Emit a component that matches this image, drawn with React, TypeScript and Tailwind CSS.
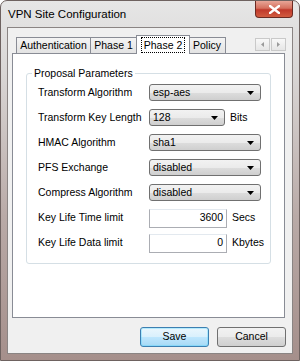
import React from "react";

const font = { fontFamily: '"Liberation Sans", Arial, sans-serif' };

function Combo({ value, w }: { value: string; w: string }) {
  return (
    <div
      className={`${w} h-[17px] flex items-center justify-between rounded-[3px] border border-[#707070] bg-[linear-gradient(to_bottom,#f2f2f2_0%,#ebebeb_50%,#dddddd_51%,#cfcfcf_100%)] pl-[3px] pr-[6px] text-[10.5px] text-black`}
    >
      <span>{value}</span>
      <svg width="7" height="4" viewBox="0 0 7 4">
        <path d="M0 0h7L3.5 4z" fill="#000" />
      </svg>
    </div>
  );
}

function Field({ value }: { value: string }) {
  return (
    <div className="w-[78px] h-[19px] flex items-center justify-end border border-[#abadb3] border-t-[#e3e9ef] bg-white pr-[3px] text-[10.5px] text-black">
      {value}
    </div>
  );
}

function Row({ label, children, h = "h-[25px]" }: { label: string; children: React.ReactNode; h?: string }) {
  return (
    <div className={`flex items-center ${h}`}>
      <div className="w-[122px] pl-[11px] text-[10.5px] text-black whitespace-nowrap">{label}</div>
      <div className="flex items-center gap-[5px] text-[10.5px] text-black">{children}</div>
    </div>
  );
}

const tabCls =
  "h-[16px] flex items-center justify-center border border-b-0 border-[#898c95] bg-[linear-gradient(to_bottom,#f4f4f4,#e3e3e3)] text-[10.5px] text-black";

export default function App() {
  return (
    <div
      className="w-[300px] h-[361px] rounded-t-[7px] border border-[#6e6260] bg-[linear-gradient(to_bottom,#e6e6e6_0%,#d9d6d5_20%,#b9aaa7_60%,#a58f8b_100%)] flex flex-col overflow-hidden"
      style={font}
    >
      {/* title bar */}
      <div className="h-[26px] flex items-start justify-between shrink-0">
        <div className="pl-[7px] pt-[5px] text-[11.5px] text-black leading-[16px]">VPN Site Configuration</div>
        <div className="mr-[6px] w-[38px] h-[17px] rounded-b-[4px] border border-t-0 border-[#6b2a22] bg-[linear-gradient(to_bottom,#e8a597_0%,#d5705e_45%,#c0392b_55%,#d25c40_100%)] flex items-center justify-center">
          <svg width="11" height="9" viewBox="0 0 11 9">
            <path d="M1 1l9 7M10 1L1 8" stroke="#fff" strokeWidth="2.4" strokeLinecap="square" />
          </svg>
        </div>
      </div>

      {/* client area */}
      <div className="mx-[6px] h-[327px] border border-[#8a8483] bg-[#f0f0f0] flex flex-col shrink-0">
        {/* tabs */}
        <div className="flex items-end justify-between h-[25px] pl-[8px] pr-[6px] pt-[6px] shrink-0">
          <div className="flex items-end h-full">
            <div className={`${tabCls} w-[75px]`}>Authentication</div>
            <div className={`${tabCls} w-[46px] border-l-0`}>Phase 1</div>
            <div className="h-[19px] w-[54px] -mx-[1px] flex items-center justify-center border border-b-0 border-[#898c95] bg-white text-[10.5px] text-black relative z-10 -mb-[1px]">
              <span className="px-[2px] leading-[14px] border border-dotted border-black">Phase 2</span>
            </div>
            <div className={`${tabCls} w-[37px] border-l-0`}>Policy</div>
          </div>
          <div className="flex mb-[2px] gap-[1px]">
            <div className="w-[15px] h-[13px] border border-[#c9c9c9] bg-[linear-gradient(to_bottom,#f8f8f8,#e6e6e6)] flex items-center justify-center">
              <svg width="3" height="5" viewBox="0 0 3 5"><path d="M3 0v5L0 2.5z" fill="#9a9a9a" /></svg>
            </div>
            <div className="w-[15px] h-[13px] border border-[#c9c9c9] bg-[linear-gradient(to_bottom,#f8f8f8,#e6e6e6)] flex items-center justify-center">
              <svg width="3" height="5" viewBox="0 0 3 5"><path d="M0 0v5l3-2.5z" fill="#9a9a9a" /></svg>
            </div>
          </div>
        </div>

        {/* panel */}
        <div className="ml-[4px] mr-[7px] h-[265px] border border-[#898c95] bg-white pt-[19px] px-[13px] shrink-0">
          <div className="relative h-[191px] border border-[#d5dfe5] rounded-[3px]">
            <div className="absolute -top-[8px] left-[5px] bg-white px-[2px] text-[10.5px] text-black leading-[14px]">
              Proposal Parameters
            </div>
            <div className="pt-[6px] flex flex-col">
              <Row label="Transform Algorithm">
                <Combo value="esp-aes" w="w-[112px]" />
              </Row>
              <Row label="Transform Key Length">
                <Combo value="128" w="w-[76px]" />
                <span>Bits</span>
              </Row>
              <Row label="HMAC Algorithm">
                <Combo value="sha1" w="w-[112px]" />
              </Row>
              <Row label="PFS Exchange">
                <Combo value="disabled" w="w-[112px]" />
              </Row>
              <Row label="Compress Algorithm">
                <Combo value="disabled" w="w-[112px]" />
              </Row>
              <Row label="Key Life Time limit" h="h-[26px]">
                <Field value="3600" />
                <span>Secs</span>
              </Row>
              <Row label="Key Life Data limit" h="h-[24px]">
                <Field value="0" />
                <span>Kbytes</span>
              </Row>
            </div>
          </div>
        </div>

        {/* buttons */}
        <div className="flex justify-end gap-[8px] pr-[6px] pt-[9px]">
          <div className="w-[69px] h-[20px] rounded-[3px] border border-[#3c7fb1] bg-[linear-gradient(to_bottom,#eaf6fd_0%,#d9f0fc_50%,#bee6fd_51%,#a7d9f5_100%)] shadow-[inset_0_0_0_1px_#48d4ff55] flex items-center justify-center text-[10.5px] text-black">
            Save
          </div>
          <div className="w-[69px] h-[20px] rounded-[3px] border border-[#707070] bg-[linear-gradient(to_bottom,#f2f2f2_0%,#ebebeb_50%,#dddddd_51%,#cfcfcf_100%)] flex items-center justify-center text-[10.5px] text-black">
            Cancel
          </div>
        </div>
      </div>
    </div>
  );
}
